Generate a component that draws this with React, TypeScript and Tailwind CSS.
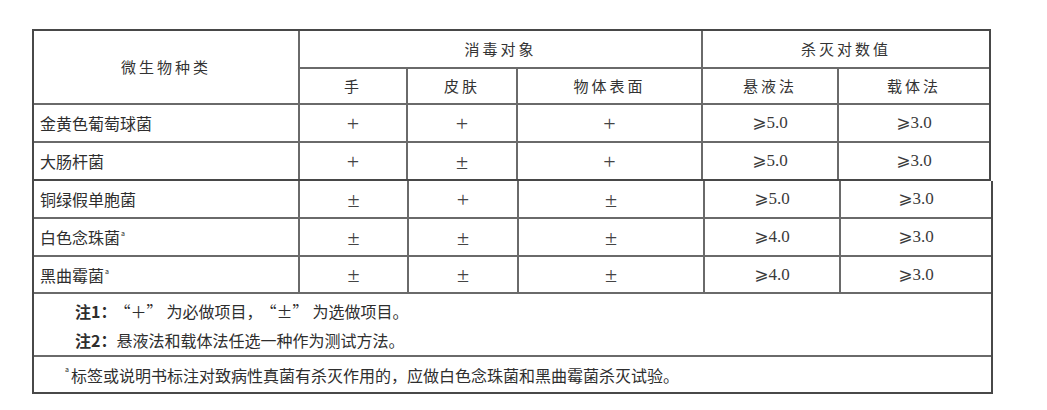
const cjk = "font-['Noto_Sans_CJK_SC',sans-serif]";
const num = "font-['Liberation_Serif','DejaVu_Serif','DejaVu_Sans',serif]";

type Row = { name: string; mark?: boolean; vals: string[]; a: string; b: string };

const upperRows: Row[] = [
  { name: '金黄色葡萄球菌', vals: ['+', '+', '+'], a: '5.0', b: '3.0' },
  { name: '大肠杆菌', vals: ['+', '±', '+'], a: '5.0', b: '3.0' },
];

const lowerRows: Row[] = [
  { name: '铜绿假单胞菌', vals: ['±', '+', '±'], a: '5.0', b: '3.0' },
  { name: '白色念珠菌', mark: true, vals: ['±', '±', '±'], a: '4.0', b: '3.0' },
  { name: '黑曲霉菌', mark: true, vals: ['±', '±', '±'], a: '4.0', b: '3.0' },
];

const line = 'border-[#6a6a6a]';

function Cells({ row, h, last }: { row: Row; h: string; last?: boolean }) {
  const bb = last ? '' : `border-b-2 ${line}`;
  return (
    <>
      <div className={`${h} ${bb} border-r-2 ${line} flex items-center pl-[6px] text-[16px] text-[#2e2e2e] ${cjk}`}>
        {row.name}
        {row.mark && <span className="self-start mt-[11px] ml-[1px] text-[7px] leading-none">a</span>}
      </div>
      {row.vals.map((v, i) => (
        <div key={i} className={`${h} ${bb} border-r-2 ${line} flex items-center justify-center text-[22px] text-[#444] ${num}`}>
          {v}
        </div>
      ))}
      <div className={`${h} ${bb} border-r-2 ${line} flex items-center justify-center text-[17px] text-[#3a3a3a] ${num}`}>
        ⩾{row.a}
      </div>
      <div className={`${h} ${bb} flex items-center justify-center text-[17px] text-[#3a3a3a] ${num}`}>
        ⩾{row.b}
      </div>
    </>
  );
}

// full-width quoted mark, as in the printed standard
function Quoted({ children }: { children: string }) {
  return <span className="ml-[6px] mr-[4px] [font-feature-settings:'fwid']">“{children}”</span>;
}

export default function App() {
  const head = `flex items-center justify-center text-[15px] tracking-[3px] text-[#333] ${cjk}`;
  return (
    <div className="w-[1047px] h-[410px] bg-white pt-[29px] pl-[32px]">
      <div className="w-[959px] border-2 border-[#484848] grid grid-cols-[266px_108px_110px_185px_136px_150px]">
        <div className={`row-span-2 border-r-2 border-b-2 ${line} ${head}`}>微生物种类</div>
        <div className={`col-span-3 h-[38px] border-r-2 border-b-2 ${line} ${head}`}>消毒对象</div>
        <div className={`col-span-2 h-[38px] border-b-2 ${line} ${head}`}>杀灭对数值</div>
        <div className={`h-[36px] border-r-2 border-b-2 ${line} ${head}`}>手</div>
        <div className={`h-[36px] border-r-2 border-b-2 ${line} ${head}`}>皮肤</div>
        <div className={`h-[36px] border-r-2 border-b-2 ${line} ${head}`}>物体表面</div>
        <div className={`h-[36px] border-r-2 border-b-2 ${line} ${head}`}>悬液法</div>
        <div className={`h-[36px] border-b-2 ${line} ${head}`}>载体法</div>
        <Cells row={upperRows[0]} h="h-[38px]" />
        <Cells row={upperRows[1]} h="h-[36px]" last />
      </div>
      <div className="w-[961px] border-2 border-t-0 border-[#484848] grid grid-cols-[266px_109px_110px_186px_136px_150px]">
        <Cells row={lowerRows[0]} h="h-[38px]" />
        <Cells row={lowerRows[1]} h="h-[38px]" />
        <Cells row={lowerRows[2]} h="h-[37px]" />
        <div className={`col-span-6 h-[63px] border-b-2 ${line} flex flex-col justify-center gap-[7px] pl-[41px] pt-[2px] text-[16px] leading-[22px] text-[#2e2e2e] ${cjk}`}>
          <p>
            <span className="font-bold">注1：</span>
            <Quoted>＋</Quoted>为必做项目，<Quoted>±</Quoted>为选做项目。
          </p>
          <p>
            <span className="font-bold">注2：</span>悬液法和载体法任选一种作为测试方法。
          </p>
        </div>
        <div className={`col-span-6 h-[35px] flex items-center pl-[31px] text-[16px] text-[#2e2e2e] ${cjk}`}>
          <span className="self-start mt-[9px] mr-[2px] text-[7px] leading-none">a</span>
          标签或说明书标注对致病性真菌有杀灭作用的，应做白色念珠菌和黑曲霉菌杀灭试验。
        </div>
      </div>
    </div>
  );
}
